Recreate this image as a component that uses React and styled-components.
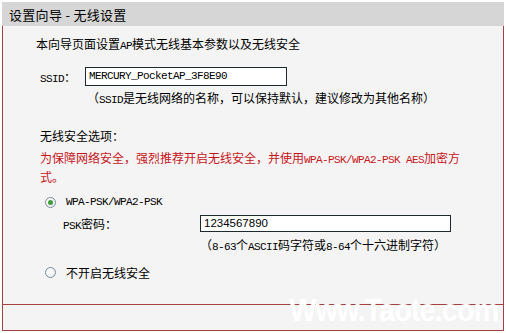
import React from "react";
import styled, { createGlobalStyle } from "styled-components";

const GlobalStyle = createGlobalStyle`
  html, body {
    margin: 0;
    padding: 0;
    background: #ffffff;
  }
  body {
    font-family: "Noto Sans CJK SC", "DejaVu Sans", sans-serif;
    font-size: 12px;
    color: #000;
  }
`;

const Page = styled.div`
  position: relative;
  width: 502px;
  padding: 2px 2px 0 2px;
  overflow: hidden;
`;

const TitleBar = styled.div`
  height: 24px;
  background: #d6d6d6;
  display: flex;
  align-items: center;
  padding-left: 7px;
  font-size: 13px;
  letter-spacing: 0.3px;
`;

const Panel = styled.div`
  background: #f4f4f4;
  border-left: 1px solid #a5423f;
  border-right: 1px solid #a5423f;
  border-bottom: 1px solid #a5423f;
`;

const Body = styled.div`
  padding: 8px 0 22px 0;
  border-bottom: 1px solid #a5423f;
`;

const Footer = styled.div`
  height: 25px;
`;

const Line = styled.div`
  height: 20px;
  line-height: 20px;
  margin-top: ${(p) => p.$top || 0}px;
  padding-left: ${(p) => p.$left || 0}px;
  white-space: nowrap;
`;

const Warning = styled.div`
  margin-top: 2px;
  padding-left: 37px;
  line-height: 19px;
  color: #c8141a;
  white-space: nowrap;
`;

const FieldRow = styled.div`
  display: flex;
  align-items: center;
  height: 20px;
  margin-top: ${(p) => p.$top || 0}px;
  padding-left: ${(p) => p.$left}px;
`;

const Label = styled.span`
  width: ${(p) => p.$w}px;
  white-space: nowrap;
`;

const TextBox = styled.div`
  box-sizing: border-box;
  width: ${(p) => p.$w}px;
  height: ${(p) => p.$h}px;
  background: #fff;
  border: 1px solid #1e2a2e;
  padding-left: 3px;
  display: flex;
  align-items: center;
  font-family: ${(p) =>
    p.$mono ? '"Liberation Mono", monospace' : '"Liberation Sans", sans-serif'};
  font-size: ${(p) => (p.$mono ? "11px" : "11.5px")};
  letter-spacing: ${(p) => (p.$mono ? "-0.6px" : "0")};
`;

const Radio = styled.span`
  box-sizing: border-box;
  width: 11px;
  height: 11px;
  border-radius: 50%;
  border: 1px solid #7d8c9a;
  background: radial-gradient(circle at 40% 40%, #ffffff 0%, #e4e8ec 100%);
  display: inline-flex;
  align-items: center;
  justify-content: center;
  margin-right: 10px;
  &::after {
    content: "";
    width: 5px;
    height: 5px;
    border-radius: 50%;
    background: ${(p) => (p.$on ? "#3f9c3a" : "transparent")};
  }
`;

const Lat = styled.span`
  font-family: "Liberation Mono", monospace;
  font-size: 11px;
  letter-spacing: -0.6px;
  line-height: 1;
`;

const Watermark = styled.div`
  position: absolute;
  right: 8px;
  bottom: 2px;
  font-family: "Liberation Sans", sans-serif;
  font-weight: bold;
  font-size: 32px;
  letter-spacing: -1px;
  color: #ffffff;
  transform: scaleX(0.9);
  transform-origin: right bottom;
`;

const App = () => {
  return (
    <>
      <GlobalStyle />
      <Page>
        <TitleBar>设置向导 - 无线设置</TitleBar>
        <Panel>
          <Body>
            <Line $left={33}>
              本向导页面设置<Lat>AP</Lat>模式无线基本参数以及无线安全
            </Line>
            <FieldRow $left={37} $top={12}>
              <Label $w={45}>
                <Lat>SSID</Lat>：
              </Label>
              <TextBox $w={202} $h={19} $mono>
                MERCURY_PocketAP_3F8E90
              </TextBox>
            </FieldRow>
            <Line $left={84} $top={2}>
              （<Lat>SSID</Lat>是无线网络的名称，可以保持默认，建议修改为其他名称）
            </Line>
            <Line $left={37} $top={18}>
              无线安全选项：
            </Line>
            <Warning>
              为保障网络安全，强烈推荐开启无线安全，并使用
              <Lat>WPA-PSK/WPA2-PSK AES</Lat>加密方
              <br />
              式。
            </Warning>
            <FieldRow $left={42} $top={6}>
              <Radio $on />
              <Lat>WPA-PSK/WPA2-PSK</Lat>
            </FieldRow>
            <FieldRow $left={60} $top={1}>
              <Label $w={137}>
                <Lat>PSK</Lat>密码：
              </Label>
              <TextBox $w={251} $h={17}>
                1234567890
              </TextBox>
            </FieldRow>
            <Line $left={197} $top={2}>
              （<Lat>8-63</Lat>个<Lat>ASCII</Lat>码字符或<Lat>8-64</Lat>个十六进制字符）
            </Line>
            <FieldRow $left={42} $top={7}>
              <Radio />
              不开启无线安全
            </FieldRow>
          </Body>
          <Footer />
        </Panel>
        <Watermark>Www.Taote.com</Watermark>
      </Page>
    </>
  );
};

export default App;
